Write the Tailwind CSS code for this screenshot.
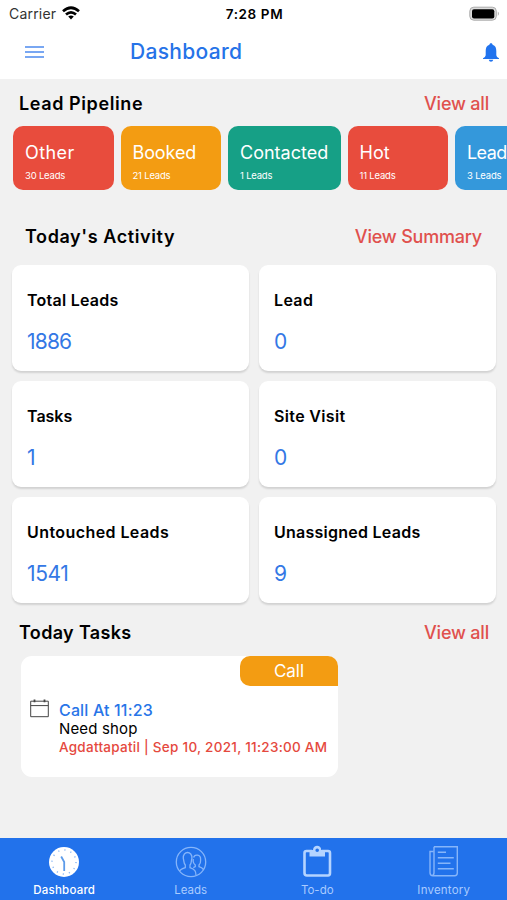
<!DOCTYPE html>
<html lang="en">
<head>
<meta charset="utf-8">
<meta name="viewport" content="width=device-width, initial-scale=1">
<title>Dashboard</title>
<script src="https://cdn.jsdelivr.net/npm/@tailwindcss/browser@4"></script>
</head>
<body class="bg-[#f1f1f1]">
<div class="flex h-[900px] w-[507px] flex-col overflow-hidden whitespace-nowrap bg-[#f1f1f1] font-['Inter',sans-serif] text-black">
  <header class="h-[79px] shrink-0 bg-white">
    <div class="grid h-7 grid-cols-3 items-center pl-[9px] pr-[7px] text-[14px] leading-7">
      <div class="flex items-center gap-[6px] text-[#333]"><span class="tracking-[0.2px]">Carrier</span>
        <svg class="mb-[2px] h-[14px] w-[18px]" viewBox="0 0 18 14" fill="none" stroke="#000" stroke-width="2.7"><path d="M1 5.2Q9-1.7 17 5.2M4 8.6Q9 4.2 14 8.6"/><path d="M6.2 10.5Q9 8.3 11.8 10.5L9 13.6Z" fill="#000" stroke="none"/></svg>
      </div>
      <span class="text-center text-[13.5px] font-semibold tracking-[0.6px]">7:28 PM</span>
      <svg class="mb-px h-4 w-[31px] justify-self-end" viewBox="0 0 31 16"><rect x=".8" y="1.2" width="26.5" height="13" rx="4" fill="#ddd" stroke="#aaa"/><rect x="3" y="3.2" width="22.3" height="9.2" rx="2" fill="#000"/><path d="M28.8 5.5Q31 7.7 28.8 10Z" fill="#aaa"/></svg>
    </div>
    <div class="flex h-[47px] items-center pl-[25px] pr-[8px]">
      <svg class="h-[14px] w-[19px]" viewBox="0 0 19 14" stroke="#4e8bee" stroke-width="1.7"><path d="M0 2H19M0 7H19M0 12H19"/></svg>
      <h1 class="ml-[86px] text-[21px] font-medium leading-6 tracking-[0.3px] text-[#2673e8]">Dashboard</h1>
      <svg class="ml-auto mt-[2px] h-[19px] w-4" viewBox="0 0 16 19" fill="#2173ee"><path d="M8 .3C9 .3 9.5 1 9.6 1.7C12.5 2.5 13.3 5 13.3 8V12.2Q13.5 14 16 15.2V16H0V15.2Q2.5 14 2.7 12.2V8C2.7 5 3.5 2.5 6.4 1.7C6.5 1 7 .3 8 .3ZM5.7 16.7H10.3Q9.8 18.8 8 18.8Q6.2 18.8 5.7 16.7Z"/></svg>
    </div>
  </header>

  <main class="flex-1">
    <div class="flex h-[47px] items-center justify-between pl-[19px] pr-[18px] pt-px text-[18px]">
      <h2 class="font-semibold tracking-[0.6px]">Lead Pipeline</h2><a class="font-medium tracking-[-0.2px] text-[#e0504d]">View all</a>
    </div>
    <div class="flex h-[64px] gap-[7px] overflow-hidden pl-[13px] text-white">
      <div class="w-[100.5px] shrink-0 rounded-[10px] bg-[#e84c3d] pl-[12px] pt-[15px]"><p class="text-[18px] leading-6 tracking-[0.4px]">Other</p><p class="mt-[5px] text-[9.5px] leading-3 tracking-[-0.2px]">30 Leads</p></div>
      <div class="w-[100.5px] shrink-0 rounded-[10px] bg-[#f39c12] pl-[12px] pt-[15px]"><p class="text-[18px] leading-6 tracking-[-0.1px]">Booked</p><p class="mt-[5px] text-[9.5px] leading-3 tracking-[-0.2px]">21 Leads</p></div>
      <div class="w-[112.5px] shrink-0 rounded-[10px] bg-[#16a086] pl-[12px] pt-[15px]"><p class="text-[18px] leading-6">Contacted</p><p class="mt-[5px] text-[9.5px] leading-3 tracking-[-0.2px]">1 Leads</p></div>
      <div class="w-[100.5px] shrink-0 rounded-[10px] bg-[#e84c3d] pl-[12px] pt-[15px]"><p class="text-[18px] leading-6">Hot</p><p class="mt-[5px] text-[9.5px] leading-3 tracking-[-0.2px]">11 Leads</p></div>
      <div class="w-[100.5px] shrink-0 rounded-[10px] bg-[#3498db] pl-[12px] pt-[15px]"><p class="text-[18px] leading-6 tracking-[-0.6px]">Lead</p><p class="mt-[5px] text-[9.5px] leading-3 tracking-[-0.2px]">3 Leads</p></div>
    </div>
    <div class="mt-[17px] flex h-[58px] items-center justify-between pl-[25px] pr-[25px] text-[18px]">
      <h2 class="font-semibold tracking-[0.6px]">Today's Activity</h2><a class="font-medium tracking-[-0.2px] text-[#e0504d]">View Summary</a>
    </div>
    <div class="grid grid-cols-2 gap-[10px] pl-3 pr-[11px]">
      <div class="h-[106px] rounded-[9px] bg-white pl-[15px] pt-[23px] shadow-[0_2px_2px_rgba(0,0,0,0.13)]"><h3 class="text-[16px] font-semibold leading-6 tracking-[0.25px]">Total Leads</h3><p class="mt-4 text-[21px] leading-7 tracking-[-0.8px] text-[#3478e5]">1886</p></div>
      <div class="h-[106px] rounded-[9px] bg-white pl-[15px] pt-[23px] shadow-[0_2px_2px_rgba(0,0,0,0.13)]"><h3 class="text-[16px] font-semibold leading-6 tracking-[0.35px]">Lead</h3><p class="mt-4 text-[21px] leading-7 text-[#3478e5]">0</p></div>
      <div class="h-[106px] rounded-[9px] bg-white pl-[15px] pt-[23px] shadow-[0_2px_2px_rgba(0,0,0,0.13)]"><h3 class="text-[16px] font-semibold leading-6">Tasks</h3><p class="mt-4 text-[21px] leading-7 text-[#3478e5]">1</p></div>
      <div class="h-[106px] rounded-[9px] bg-white pl-[15px] pt-[23px] shadow-[0_2px_2px_rgba(0,0,0,0.13)]"><h3 class="text-[16px] font-semibold leading-6 tracking-[0.35px]">Site Visit</h3><p class="mt-4 text-[21px] leading-7 text-[#3478e5]">0</p></div>
      <div class="h-[106px] rounded-[9px] bg-white pl-[15px] pt-[23px] shadow-[0_2px_2px_rgba(0,0,0,0.13)]"><h3 class="text-[16px] font-semibold leading-6 tracking-[0.42px]">Untouched Leads</h3><p class="mt-4 text-[21px] leading-7 tracking-[-0.4px] text-[#3478e5]">1541</p></div>
      <div class="h-[106px] rounded-[9px] bg-white pl-[15px] pt-[23px] shadow-[0_2px_2px_rgba(0,0,0,0.13)]"><h3 class="text-[16px] font-semibold leading-6 tracking-[0.25px]">Unassigned Leads</h3><p class="mt-4 text-[21px] leading-7 text-[#3478e5]">9</p></div>
    </div>
    <div class="flex h-[53px] items-center justify-between pl-[19px] pr-[18px] pt-[5px] text-[18px]">
      <h2 class="font-semibold tracking-[0.35px]">Today Tasks</h2><a class="font-medium tracking-[-0.2px] text-[#e0504d]">View all</a>
    </div>
    <div class="ml-[21px] h-[121px] w-[317px] rounded-[11px] bg-white">
      <div class="ml-auto h-[30px] w-[98px] rounded-t-[10px] rounded-bl-[10px] bg-[#f39c12] text-center text-[17px] leading-[30px] text-white">Call</div>
      <div class="mt-[13px] flex pl-[9px]">
        <svg class="h-[19px] w-[19px]" viewBox="0 0 19 19" fill="none" stroke="#444"><path d="M.7 2.2H18.3V17.7H.7ZM.7 6.6H18.3"/><path d="M4.5.5V3.3M14.5.5V3.3" stroke-width="1.8"/></svg>
        <div class="ml-[10px] pt-px">
          <p class="text-[16px] font-medium leading-[20px] tracking-[0.15px] text-[#2875e8]">Call At 11:23</p>
          <p class="text-[15px] leading-[18px] tracking-[0.15px]">Need shop</p>
          <p class="text-[13.5px] font-medium leading-[19px] tracking-[0.27px] text-[#e5493e]">Agdattapatil | Sep 10, 2021, 11:23:00 AM</p>
        </div>
      </div>
    </div>
  </main>

  <nav class="grid h-[62px] shrink-0 grid-cols-4 bg-[#2272eb] pl-px pt-[8px] text-center text-[11.5px] leading-4 text-[#a9cbff]">
    <div class="flex flex-col items-center gap-1 font-medium tracking-[0.2px] text-white">
      <svg class="h-8 w-8" viewBox="0 0 32 32"><circle cx="16" cy="16" r="15" fill="#fff"/><circle cx="16" cy="16" r="12" fill="none" stroke="#8dbaf5" stroke-width="1.5" stroke-dasharray="1.2 5.083"/><path d="M13.2 10.5L16.2 16V25" fill="none" stroke="#5c9be9" stroke-width="1.8"/></svg>
      <span>Dashboard</span>
    </div>
    <div class="flex flex-col items-center gap-1">
      <svg class="h-8 w-8" viewBox="0 0 32 32" fill="none" stroke="#86b5fa" stroke-width="1.3"><circle cx="16" cy="16" r="14.7"/><path d="M4.5 25Q5.5 23.3 10.3 21.7V19C8.4 17 9.2 15 8.3 12.5C7.5 4.5 17.6 4.5 16.9 12.5C16 15 16.8 17 15 19V21.7C20 23.3 21 25 21 29.5"/><path d="M18.6 11.5C19.5 7.8 25.7 8.3 25.6 13C25.4 14.5 26.4 17 24 19V20.7Q27 21.7 28.5 23.5M18.3 13C17.8 15.5 18.6 17.7 20.3 19V20.7L18.3 21.6"/></svg>
      <span>Leads</span>
    </div>
    <div class="flex flex-col items-center gap-1">
      <svg class="-mt-px mb-px h-8 w-8" viewBox="0 0 32 32"><path d="M11 6H5.5Q3.5 6 3.5 8V28Q3.5 30.5 6 30.5H27Q29 30.5 29 28V8Q29 6 27 6H21" fill="none" stroke="#b5d4ff" stroke-width="2.6"/><path fill-rule="evenodd" d="M8.5 5H12C12.3-.6 20-.6 20.3 5H24V11.5H8.5ZM16.2 3.5A1.8 1.8 0 1 0 16.2 7.1A1.8 1.8 0 1 0 16.2 3.5Z" fill="#b5d4ff"/></svg>
      <span>To-do</span>
    </div>
    <div class="flex flex-col items-center gap-1 tracking-[0.2px]">
      <svg class="-mt-px mb-px h-8 w-8" viewBox="0 0 32 32" fill="none" stroke="#86b5fa" stroke-width="1.4"><path d="M6 1.7H29.3V28Q29.3 30.7 26.6 30.7H5Q2 30.7 2 27.8V6.5H5.2M6 1.7V27.5Q6 30.5 4 30.5M9.8 7.2H18M9.8 12.7H25.8M9.8 18.2H22.5M9.8 23.8H25.8"/></svg>
      <span>Inventory</span>
    </div>
  </nav>
</div>
</body>
</html>
